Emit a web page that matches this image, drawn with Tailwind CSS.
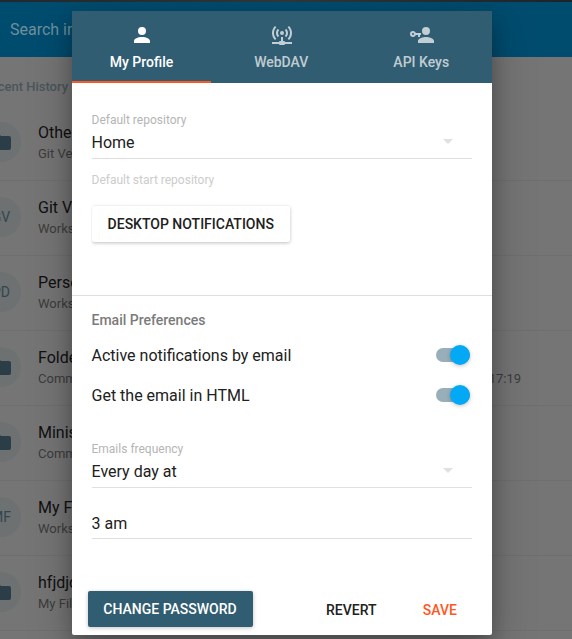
<!DOCTYPE html>
<html lang="en">
<head>
<meta charset="utf-8">
<title>My Profile</title>
<script src="https://cdn.jsdelivr.net/npm/@tailwindcss/browser@4"></script>
</head>
<body class="relative h-[639px] w-[572px] overflow-hidden bg-[#757575] font-['Roboto',sans-serif] text-[#212121]">
<svg class="hidden"><symbol id="folder" viewBox="0 0 24 24"><path d="M10,4H4C2.89,4 2,4.89 2,6V18A2,2 0 0,0 4,20H20A2,2 0 0,0 22,18V8C22,6.89 21.1,6 20,6H12L10,4Z"/></symbol></svg>

<!-- Workspace behind the dialog -->
<main class="flex h-full flex-col">
  <div class="h-0.5 shrink-0 bg-gradient-to-r from-[#22282b] via-[#30383d] to-[#1c2429]"></div>
  <header class="flex h-[55px] shrink-0 items-center bg-[#004c6f] pl-[10px] text-base text-[#6f8f9b]">Search in</header>
  <h2 class="-ml-[17.5px] flex h-[49px] shrink-0 items-center pt-[10px] text-[13px] font-medium whitespace-nowrap text-[#4b565a]">Recent History</h2>
  <ul id="history">
    <li class="flex h-[75px] items-start border-b border-[#6f6f6f]">
      <span class="mt-4 -ml-[19px] flex size-10 shrink-0 items-center justify-center rounded-full bg-[#6d7171]"><svg class="size-6 fill-[#2b3d46]"><use href="#folder"/></svg></span>
      <div class="ml-[17px] pt-[17px]"><p class="text-base leading-5 text-[#101010]">Othe</p><p class="mt-[3px] text-[13px] leading-4 text-[#3c3c3c]">Git Ve</p></div>
    </li>
    <li class="flex h-[75px] items-start border-b border-[#6f6f6f]">
      <span class="mt-4 -ml-[19px] flex size-10 shrink-0 items-center justify-center rounded-full bg-[#6d7171] text-sm text-[#33464f]">GV</span>
      <div class="ml-[17px] pt-[17px]"><p class="text-base leading-5 text-[#101010]">Git V</p><p class="mt-[3px] text-[13px] leading-4 text-[#3c3c3c]">Works</p></div>
    </li>
    <li class="flex h-[75px] items-start border-b border-[#6f6f6f]">
      <span class="mt-4 -ml-[19px] flex size-10 shrink-0 items-center justify-center rounded-full bg-[#6d7171] text-sm text-[#33464f]">PD</span>
      <div class="ml-[17px] pt-[17px]"><p class="text-base leading-5 text-[#101010]">Perso</p><p class="mt-[3px] text-[13px] leading-4 text-[#3c3c3c]">Works</p></div>
    </li>
    <li class="flex h-[75px] items-start border-b border-[#6f6f6f]">
      <span class="mt-4 -ml-[19px] flex size-10 shrink-0 items-center justify-center rounded-full bg-[#6d7171]"><svg class="size-6 fill-[#2b3d46]"><use href="#folder"/></svg></span>
      <div class="ml-[17px] flex-1 pt-[17px]"><p class="text-base leading-5 text-[#101010]">Folde</p><p class="mt-[3px] flex justify-between pr-[51px] text-[13px] leading-4 text-[#3c3c3c]"><span>Comm</span><span>17:19</span></p></div>
    </li>
    <li class="flex h-[75px] items-start border-b border-[#6f6f6f]">
      <span class="mt-4 -ml-[19px] flex size-10 shrink-0 items-center justify-center rounded-full bg-[#6d7171]"><svg class="size-6 fill-[#2b3d46]"><use href="#folder"/></svg></span>
      <div class="ml-[17px] pt-[17px]"><p class="text-base leading-5 text-[#101010]">Minis</p><p class="mt-[3px] text-[13px] leading-4 text-[#3c3c3c]">Comm</p></div>
    </li>
    <li class="flex h-[75px] items-start border-b border-[#6f6f6f]">
      <span class="mt-4 -ml-[19px] flex size-10 shrink-0 items-center justify-center rounded-full bg-[#6d7171] text-sm text-[#33464f]">MF</span>
      <div class="ml-[17px] pt-[17px]"><p class="text-base leading-5 text-[#101010]">My F</p><p class="mt-[3px] text-[13px] leading-4 text-[#3c3c3c]">Works</p></div>
    </li>
    <li class="flex h-[75px] items-start border-b border-[#6f6f6f]">
      <span class="mt-4 -ml-[19px] flex size-10 shrink-0 items-center justify-center rounded-full bg-[#6d7171]"><svg class="size-6 fill-[#2b3d46]"><use href="#folder"/></svg></span>
      <div class="ml-[17px] pt-[17px]"><p class="text-base leading-5 text-[#101010]">hfjdjd</p><p class="mt-[3px] text-[13px] leading-4 text-[#3c3c3c]">My Fil</p></div>
    </li>
  </ul>
</main>

<!-- Profile dialog -->
<section class="absolute top-[11px] left-[72px] flex h-[624px] w-[420px] flex-col rounded-b-xs bg-white shadow-[0_14px_45px_rgba(0,0,0,0.25),0_10px_18px_rgba(0,0,0,0.22)]">
  <nav class="grid h-[72px] shrink-0 grid-cols-3 bg-[#315d72] text-sm font-medium text-white/70">
    <div class="flex flex-col items-center pt-3 text-white">
      <svg class="mr-px size-6" viewBox="0 0 24 24" fill="currentColor"><path d="M12,4A4,4 0 0,1 16,8A4,4 0 0,1 12,12A4,4 0 0,1 8,8A4,4 0 0,1 12,4M12,14C16.42,14 20,15.79 20,18V20H4V18C4,15.79 7.58,14 12,14Z"/></svg>
      <span class="mt-[5px] mr-px leading-5">My Profile</span>
      <i class="mt-[9px] mr-px h-0.5 w-[139px] bg-[#ff5722]"></i>
    </div>
    <div class="flex flex-col items-center pt-3">
      <svg class="mr-px size-6" viewBox="0 0 24 24" fill="currentColor"><path d="M4.93,2.93C3.12,4.74 2,7.24 2,10C2,12.76 3.12,15.26 4.93,17.07L6.34,15.66C4.89,14.22 4,12.22 4,10C4,7.79 4.89,5.78 6.34,4.34L4.93,2.93M19.07,2.93L17.66,4.34C19.11,5.78 20,7.79 20,10C20,12.22 19.11,14.22 17.66,15.66L19.07,17.07C20.88,15.26 22,12.76 22,10C22,7.24 20.88,4.74 19.07,2.93M7.76,5.76C6.67,6.85 6,8.35 6,10C6,11.65 6.67,13.15 7.76,14.24L9.17,12.83C8.45,12.11 8,11.11 8,10C8,8.89 8.45,7.89 9.17,7.17L7.76,5.76M16.24,5.76L14.83,7.17C15.55,7.89 16,8.89 16,10C16,11.11 15.55,12.11 14.83,12.83L16.24,14.24C17.33,13.15 18,11.65 18,10C18,8.35 17.33,6.85 16.24,5.76M12,8A2,2 0 0,0 10,10A2,2 0 0,0 12,12A2,2 0 0,0 14,10A2,2 0 0,0 12,8M11,14V18H10A1,1 0 0,0 9,19H2V21H9A1,1 0 0,0 10,22H14A1,1 0 0,0 15,21H22V19H15A1,1 0 0,0 14,18H13V14H11Z"/></svg>
      <span class="mt-[5px] mr-[1.5px] leading-5">WebDAV</span>
    </div>
    <div class="flex flex-col items-center pt-3">
      <svg class="mr-px size-6" viewBox="0 0 24 24" fill="currentColor"><path d="M11,10V12H10V14H8V12H5.83C5.42,13.17 4.31,14 3,14A3,3 0 0,1 0,11A3,3 0 0,1 3,8C4.31,8 5.42,8.83 5.83,10H11M3,10A1,1 0 0,0 2,11A1,1 0 0,0 3,12A1,1 0 0,0 4,11A1,1 0 0,0 3,10M16,14C18.67,14 24,15.34 24,18V20H8V18C8,15.34 13.33,14 16,14M16,12A4,4 0 0,1 12,8A4,4 0 0,1 16,4A4,4 0 0,1 20,8A4,4 0 0,1 16,12Z"/></svg>
      <span class="mt-[5px] mr-[1.5px] leading-5">API Keys</span>
    </div>
  </nav>

  <div class="h-[213px] shrink-0 border-b border-[#dedede] pt-[29px] pr-5 pl-[19.5px]">
    <label class="block text-xs leading-4 text-[#b5b5b5]">Default repository</label>
    <div class="flex h-[31px] items-start justify-between border-b border-[#e0e0e0] pt-[5px] pr-[19px]"><span class="text-base leading-5">Home</span><i class="mt-[6px] border-x-5 border-t-5 border-x-transparent border-t-[#e0e0e0]"></i></div>
    <p class="mt-[13px] text-xs leading-4 text-[#cccccc]">Default start repository</p>
    <button class="mt-[18px] flex h-9 w-[198.5px] items-center justify-center rounded-xs text-sm font-medium whitespace-nowrap shadow-[0_1px_4px_rgba(0,0,0,0.14),0_1px_3px_rgba(0,0,0,0.12)] [clip-path:inset(-5px_-8px_-8px_0)]">DESKTOP NOTIFICATIONS</button>
  </div>

  <div class="flex-1 pt-[14px] pr-5 pl-[19.5px]">
    <h3 class="text-sm leading-5 font-medium text-[#7b7b7b]">Email Preferences</h3>
    <div class="mt-[15px] flex h-5 items-center justify-between pr-[2px] text-base"><span class="pt-px">Active notifications by email</span><span class="flex h-[14px] w-[34px] items-center justify-end rounded-full bg-[#98aeb9]"><i class="size-5 shrink-0 rounded-full bg-[#03a9f4] shadow-[0_1px_4px_rgba(0,0,0,0.24)]"></i></span></div>
    <div class="mt-5 flex h-5 items-center justify-between pr-[2px] text-base"><span class="pt-px">Get the email in HTML</span><span class="flex h-[14px] w-[34px] items-center justify-end rounded-full bg-[#98aeb9]"><i class="size-5 shrink-0 rounded-full bg-[#03a9f4] shadow-[0_1px_4px_rgba(0,0,0,0.24)]"></i></span></div>
    <label class="mt-9 block text-xs leading-4 text-[#b5b5b5]">Emails frequency</label>
    <div class="flex h-[31px] items-start justify-between border-b border-[#e0e0e0] pt-[5px] pr-[19px]"><span class="text-base leading-5">Every day at</span><i class="mt-[6px] border-x-5 border-t-5 border-x-transparent border-t-[#e0e0e0]"></i></div>
    <div class="mt-[26px] h-[25px] border-b border-[#dedede] text-base leading-5">3 am</div>
  </div>

  <footer class="flex h-[52px] shrink-0 items-start px-4 pt-2 text-sm font-medium">
    <button class="h-9 w-[165px] shrink-0 rounded-xs bg-[#315d72] pr-px whitespace-nowrap text-white shadow-[0_1px_4px_rgba(0,0,0,0.24)]">CHANGE PASSWORD</button>
    <button class="mt-px ml-[73px] h-9 whitespace-nowrap">REVERT</button>
    <button class="mt-px ml-auto mr-[19px] h-9 text-[#ff5722]">SAVE</button>
  </footer>
</section>
</body>
</html>
